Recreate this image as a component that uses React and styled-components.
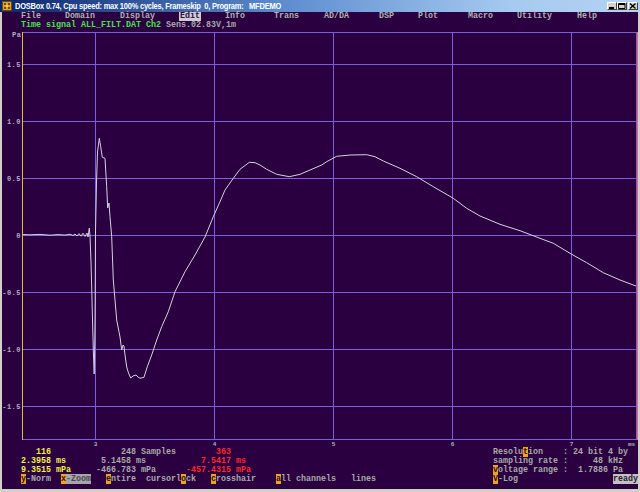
import React from "react";
import styled, { createGlobalStyle } from "styled-components";

const GlobalStyle = createGlobalStyle`
  html, body {
    margin: 0;
    padding: 0;
    background: #d4d0c8;
  }
  body {
    width: 640px;
    height: 492px;
    overflow: hidden;
  }
`;

const colors = {
  bg: "#2a0040",
  grid: "#7a5ede",
  gray: "#a8a8a8",
  menu: "#b0b0b0",
  yellow: "#f4f044",
  red: "#ff2a2a",
  green: "#4ee04e",
  key: "#f0a418",
  curve: "#d8d0e0",
  label: "#b4acc0",
};

const DOS_FONT = `"Liberation Mono", "DejaVu Sans Mono", monospace`;

const curve = [
  [22, 234.5], [30, 234.8], [40, 234.4], [50, 235.2], [58, 234.6], [65, 235.1],
  [70, 234.2], [73, 235.5], [75, 234], [77, 236], [79, 233.6], [81, 236.2],
  [83, 233.2], [85, 236.5], [87, 233], [88, 237], [89.3, 228], [90, 236],
  [91, 262], [91.7, 287], [92.5, 320], [93.3, 350], [94.2, 374], [94.8, 340],
  [95.2, 300], [95.5, 232], [96.5, 182], [97.5, 152], [99.3, 138.3],
  [100.7, 146.7], [102.3, 157.3], [105, 158.3], [106.7, 186.7], [107.7, 208],
  [109, 203], [110, 216.7], [111.7, 236.7], [113.3, 280], [116.7, 320],
  [120, 337], [121.7, 350], [123, 345], [124, 346], [125, 355], [126.7, 367],
  [128.5, 373], [130.7, 378], [133, 376], [136, 375], [138, 377], [140, 378.3],
  [144, 377.3], [147.3, 366.7], [151.7, 355], [156.7, 340], [161.7, 326.7],
  [168.3, 311.7], [175, 291.7], [185, 271.7], [195, 255], [200, 246],
  [205, 237], [213.3, 216.7], [220, 201.7], [225, 190], [233.3, 178.3],
  [240, 169.3], [249.3, 162.3], [255, 162.7], [260, 165], [266.7, 169.3],
  [276.7, 174.3], [289.3, 176.7], [300, 174.3], [310, 170], [321.7, 165],
  [326.7, 161.7], [336.7, 156.3], [350, 155], [366.7, 154.7], [375, 156.7],
  [383.3, 161], [400, 168.3], [416.7, 176.7], [433.3, 186.7], [453.3, 198.3],
  [466.7, 208.3], [480, 216], [500, 224.3], [520, 230.7], [540, 238.3],
  [553.3, 243.3], [570, 253.3], [586.7, 262.7], [603.3, 272.7], [620, 280],
  [636, 286],
];

const yTicks = [
  ["1.5", 64], ["1.0", 121], ["0.5", 178], ["0", 235],
  ["-0.5", 292], ["-1.0", 349], ["-1.5", 406],
];
const xTicks = [["3", 95], ["4", 214], ["5", 333], ["6", 452], ["7", 571]];

const menuItems = [
  { name: "File", width: 44 },
  { name: "Domain", width: 55 },
  { name: "Display", width: 60 },
  { name: "Edit", width: 45, active: true },
  { name: "Info", width: 49 },
  { name: "Trans", width: 50 },
  { name: "AD/DA", width: 55 },
  { name: "DSP", width: 39 },
  { name: "Plot", width: 50 },
  { name: "Macro", width: 49 },
  { name: "Utility", width: 60 },
  { name: "Help", width: 40 },
];

function DosIcon() {
  return (
    <svg width="10" height="10" viewBox="0 0 10 10">
      <rect x="0.5" y="0.5" width="9" height="9" fill="#d8a42c" stroke="#7a4a08" />
      <rect x="2" y="2" width="2" height="2" fill="#7a4a08" />
      <rect x="6" y="2" width="2" height="2" fill="#7a4a08" />
      <rect x="2" y="6" width="2" height="2" fill="#7a4a08" />
      <rect x="6" y="6" width="2" height="2" fill="#7a4a08" />
      <rect x="4" y="4" width="2" height="2" fill="#f4d060" />
    </svg>
  );
}

function WinGlyph({ kind }) {
  return (
    <svg width="8" height="6" viewBox="0 0 8 6">
      {kind === "min" && <rect x="1" y="4" width="5" height="2" fill="#000" />}
      {kind === "max" && (
        <path d="M0.5 0.5h6.5v5h-6.5z M0.5 1.5h6.5" fill="none" stroke="#000" />
      )}
      {kind === "close" && (
        <path d="M1 0.5l5.5 5 M6.5 0.5l-5.5 5" fill="none" stroke="#000" strokeWidth="1.3" />
      )}
    </svg>
  );
}

function Plot() {
  const points = curve.map(([x, y]) => `${x},${y}`).join(" ");
  return (
    <PlotSvg width="636" height="418" viewBox="2 30 636 418">
      {yTicks.map(([, y]) => (
        <line key={y} x1="22" x2="636" y1={y + 0.5} y2={y + 0.5} stroke={colors.grid} />
      ))}
      {xTicks.map(([, x]) => (
        <line key={x} x1={x + 0.5} x2={x + 0.5} y1="32" y2="439" stroke={colors.grid} />
      ))}
      <rect x="22.5" y="32.5" width="614" height="407" fill="none" stroke={colors.grid} />
      <polyline points={points} fill="none" stroke={colors.curve} strokeWidth="1" />
      <line x1="22.5" x2="22.5" y1="32" y2="440" stroke="#d8c040" />
      <line x1="637.5" x2="637.5" y1="32" y2="440" stroke="#e86a6a" />
      <g fontFamily={DOS_FONT} fontSize="7" fill={colors.label} letterSpacing="0.5">
        <text x="12" y="37">Pa</text>
        {yTicks.map(([t, y]) => (
          <text key={t} x="21" y={y + 2.8} textAnchor="end">{t}</text>
        ))}
      </g>
      <g fontFamily={DOS_FONT} fontSize="6" fill={colors.label}>
        {xTicks.map(([t, x]) => (
          <text key={t} x={x + 0.5} y="445.5" textAnchor="middle">{t}</text>
        ))}
        <text x="628" y="445.5">ms</text>
      </g>
    </PlotSvg>
  );
}

export default function App() {
  return (
    <Window>
      <GlobalStyle />
      <TitleBar>
        <DosIcon />
        <TitleText>DOSBox 0.74, Cpu speed: max 100% cycles, Frameskip  0, Program:   MFDEMO</TitleText>
        <WinButtons>
          <WinButton><WinGlyph kind="min" /></WinButton>
          <WinButton><WinGlyph kind="max" /></WinButton>
          <WinButton $gap><WinGlyph kind="close" /></WinButton>
        </WinButtons>
      </TitleBar>
      <Screen>
        <Menu>
          {menuItems.map((m) => (
            <MenuItem key={m.name} $width={m.width}>
              <MenuLabel $active={m.active}>{m.name}</MenuLabel>
            </MenuItem>
          ))}
        </Menu>
        <Line>
          <Txt $c={colors.green}>Time signal ALL_FILT.DAT Ch2</Txt>
          <Txt $c={colors.gray}> Sens.02.83V,1m</Txt>
        </Line>
        <Plot />
        <Status>
          <Column>
            <Line>
              <Txt $c={colors.yellow}>{"   116"}</Txt>
              <Txt $c={colors.gray}>{"              248 Samples        "}</Txt>
              <Txt $c={colors.red}>363</Txt>
            </Line>
            <Line>
              <Txt $c={colors.yellow}>2.3958 ms</Txt>
              <Txt $c={colors.gray}>{"       5.1458 ms           "}</Txt>
              <Txt $c={colors.red}>7.5417 ms</Txt>
            </Line>
            <Line>
              <Txt $c={colors.yellow}>9.3515 mPa</Txt>
              <Txt $c={colors.gray}>{"     -466.783 mPa      "}</Txt>
              <Txt $c={colors.red}>-457.4315 mPa</Txt>
            </Line>
            <Line>
              <Key>y</Key>-Norm{"  "}
              <Key>x</Key><ZoomTag>-Zoom</ZoomTag>{"   "}
              <Key>e</Key>ntire{"  "}
              cursorl<Key>o</Key>ck{"   "}
              <Key>c</Key>rosshair{"    "}
              <Key>a</Key>ll channels{"   "}
              lines
            </Line>
          </Column>
          <Column>
            <Line>Resolu<Key>t</Key>ion    : 24 bit 4 by</Line>
            <Line>sampling rate :     48 kHz</Line>
            <Line><Key>v</Key>oltage range :  1.7886 Pa</Line>
            <Line>
              <Key>V</Key>-Log{"                   "}
              <Ready>ready</Ready>
            </Line>
          </Column>
        </Status>
      </Screen>
    </Window>
  );
}

const Window = styled.div`
  width: 640px;
  height: 492px;
  display: flex;
  flex-direction: column;
  overflow: hidden;
`;

const TitleBar = styled.div`
  height: 12px;
  display: flex;
  align-items: center;
  padding: 0 2px;
  background: linear-gradient(to right, #0a246a 0%, #5f8ed0 45%, #a6caf0 80%, #b4d2f2 100%);
`;

const TitleText = styled.span`
  flex: 1;
  margin-left: 3px;
  font-family: "Liberation Sans", Arial, sans-serif;
  font-weight: bold;
  font-size: 8.5px;
  letter-spacing: -0.25px;
  color: #ffffff;
  white-space: pre;
  line-height: 12px;
  transform: scaleX(0.88);
  transform-origin: left center;
`;

const WinButtons = styled.div`
  display: flex;
  align-items: center;
`;

const WinButton = styled.div`
  width: 10px;
  height: 8px;
  box-sizing: border-box;
  margin-left: ${({ $gap }) => ($gap ? "1px" : "0")};
  background: #d4d0c8;
  border: 1px solid;
  border-color: #ffffff #404040 #404040 #ffffff;
  display: flex;
  align-items: center;
  justify-content: center;
  overflow: hidden;
`;

const Screen = styled.div`
  flex: 1;
  display: flex;
  flex-direction: column;
  background: ${colors.bg};
  border-left: 2px solid #d4d0c8;
  border-right: 2px solid #d4d0c8;
  border-bottom: 3px solid #d4d0c8;
  font-family: ${DOS_FONT};
  font-size: 8.333px;
  font-weight: bold;
  color: ${colors.gray};
`;

const Menu = styled.div`
  height: 9px;
  display: flex;
  align-items: flex-end;
  padding-left: 19px;
`;

const MenuItem = styled.div`
  width: ${({ $width }) => $width}px;
  flex: none;
  line-height: 9px;
  color: ${colors.menu};
`;

const MenuLabel = styled.span`
  display: inline-block;
  padding: 0 1px;
  margin-left: -1px;
  background: ${({ $active }) => ($active ? "#d0ccd4" : "transparent")};
  color: ${({ $active }) => ($active ? "#30083e" : "inherit")};
`;

const Line = styled.div`
  height: 9px;
  line-height: 9px;
  white-space: pre;
  padding-left: 19px;
`;

const Txt = styled.span`
  color: ${({ $c }) => $c};
`;

const Key = styled.span`
  background: ${colors.key};
  color: #2a0a20;
`;

const ZoomTag = styled.span`
  background: #a8a4ac;
  color: #4a4450;
`;

const Ready = styled.span`
  background: #c4c0c8;
  color: #2a2030;
`;

const PlotSvg = styled.svg`
  display: block;
  flex: none;
`;

const Status = styled.div`
  display: grid;
  grid-template-columns: 472px 1fr;
`;

const Column = styled.div`
  display: flex;
  flex-direction: column;
`;
